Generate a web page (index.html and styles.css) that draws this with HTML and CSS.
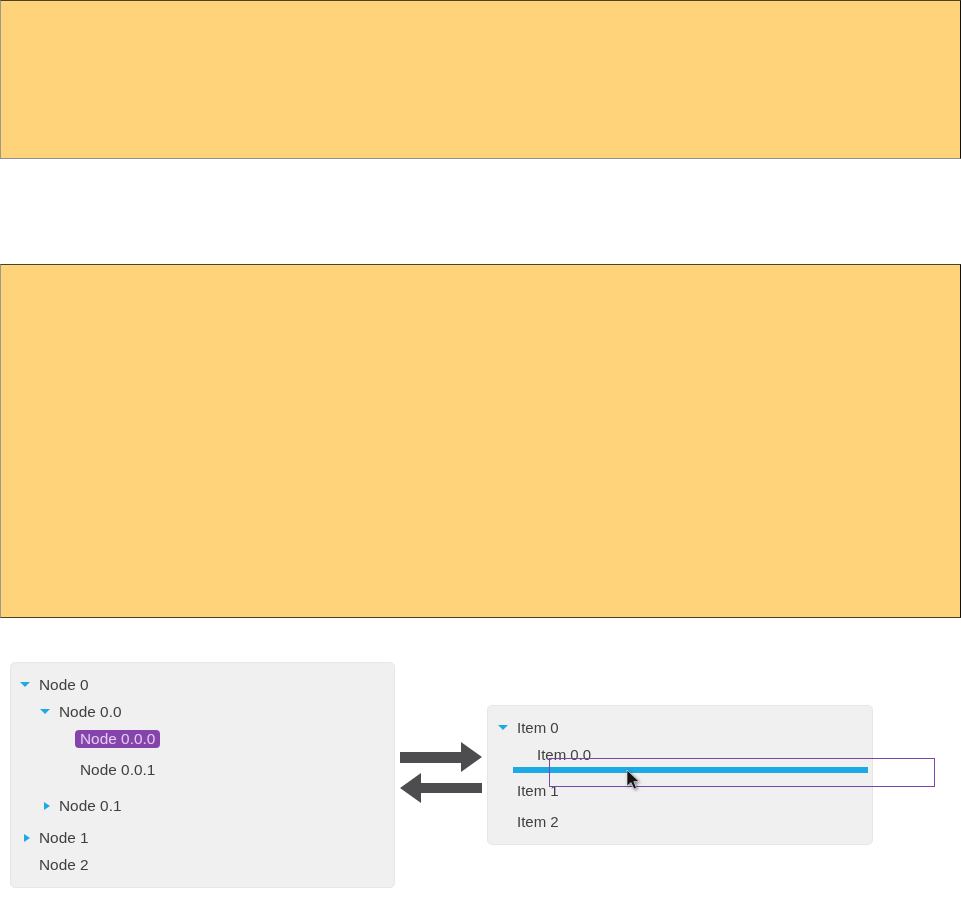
FILE: index.html
```html
<!DOCTYPE html>
<html lang="en">
<head>
<meta charset="utf-8">
<title>Tree drag and drop</title>
<link rel="stylesheet" href="styles.css">
</head>
<body>
<div class="block block-short"></div>
<div class="block block-tall"></div>
<div class="stage">
  <ul class="tree panel panel-left">
    <li class="row"><span class="caret caret-down"></span><span class="label">Node 0</span></li>
    <li class="row indent-1"><span class="caret caret-down"></span><span class="label">Node 0.0</span></li>
    <li class="row indent-2"><span class="label badge">Node 0.0.0</span></li>
    <li class="row indent-2 gap-md"><span class="label">Node 0.0.1</span></li>
    <li class="row indent-1 gap-xl"><span class="caret caret-right"></span><span class="label">Node 0.1</span></li>
    <li class="row gap-lg"><span class="caret caret-right"></span><span class="label">Node 1</span></li>
    <li class="row"><span class="caret"></span><span class="label">Node 2</span></li>
  </ul>
  <svg class="arrows" width="82" height="61" viewBox="0 0 82 61" aria-hidden="true">
    <path d="M0 10H61V0L82 15L61 30V21H0Z"/>
    <path d="M82 41H21V31L0 46L21 61V51H82Z"/>
  </svg>
  <div class="panel panel-right">
    <ul class="tree">
      <li class="row"><span class="caret caret-down"></span><span class="label">Item 0</span></li>
      <li class="row indent-1b"><span class="label">Item 0.0</span></li>
      <li class="drop-bar"></li>
      <li class="row after-bar"><span class="caret"></span><span class="label">Item 1</span></li>
      <li class="row gap-md"><span class="caret"></span><span class="label">Item 2</span></li>
    </ul>
    <div class="drag-box"></div>
    <svg class="pointer" width="16" height="22" viewBox="0 0 16 22" aria-hidden="true">
      <path d="M1 1V17L5 13.5L8 20L10.5 19L7.8 12.6H13Z"/>
    </svg>
  </div>
</div>
</body>
</html>
```

FILE: styles.css
```css
* { box-sizing: border-box; }
html, body { margin: 0; padding: 0; background: #fff; }
body { font-family: "Liberation Sans", Arial, sans-serif; font-size: 15px; color: #3f3f3f; }

.block {
  background: #ffd37a;
  border-style: solid;
  border-width: 1px;
  border-color: #4d4026 #111 #8f8f8f #9a9a8c;
}
.block-short { height: 159px; }
.block-tall { height: 354px; margin-top: 105px; border-bottom-color: #4d4026; }

.stage {
  display: flex;
  align-items: center;
  gap: 5px;
  margin-top: 44px;
  padding-left: 10px;
  filter: blur(0.4px);
}
.panel {
  background: #f0f0f0;
  border: 1px solid #e6e6e6;
  border-radius: 5px;
}
.panel-left { width: 385px; height: 226px; font-size: 15.4px; }
.panel-right { width: 386px; height: 140px; position: relative; }
.tree { list-style: none; margin: 0; padding: 0; }
.panel-left { padding: 13px 0 0 9px; }
.panel-right .tree { padding: 13px 0 0 10px; }

.row { display: flex; align-items: center; height: 18px; line-height: 18px; white-space: nowrap; }
.row + .row { margin-top: 9px; }
.caret { width: 19px; height: 18px; flex: none; position: relative; }
.caret-down::before {
  content: "";
  position: absolute;
  left: 0;
  top: 6px;
  border-style: solid;
  border-width: 5px 5px 0;
  border-color: #1caae4 transparent transparent;
}
.caret-right::before {
  content: "";
  position: absolute;
  left: 4px;
  top: 5px;
  border-style: solid;
  border-width: 4px 0 4px 6px;
  border-color: transparent transparent transparent #1caae4;
}
.indent-1 { padding-left: 20px; }
.indent-1b { padding-left: 39px; }
.indent-2 { padding-left: 60px; }
.row + .row.gap-md { margin-top: 13px; }
.row + .row.gap-lg { margin-top: 14px; }
.row + .row.gap-xl { margin-top: 18px; }

.badge {
  background: #8544ab;
  color: #e4cdf2;
  border-radius: 4px;
  padding: 0 5px;
  margin-left: -5px;
}
.drop-bar { height: 6px; width: 355px; margin: 3px 0 9px 15px; background: #1caae4; }

.arrows { flex: none; fill: #4d4d4f; margin-bottom: 6px; }
.drag-box {
  position: absolute;
  left: 61px;
  top: 52px;
  width: 386px;
  height: 29px;
  border: 1px solid #7d45a8;
}
.pointer {
  position: absolute;
  left: 138px;
  top: 63px;
  fill: #141414;
  stroke: #fff;
  stroke-width: 0.6;
  filter: drop-shadow(1px 1px 1.5px rgba(0,0,0,.5));
}
```
